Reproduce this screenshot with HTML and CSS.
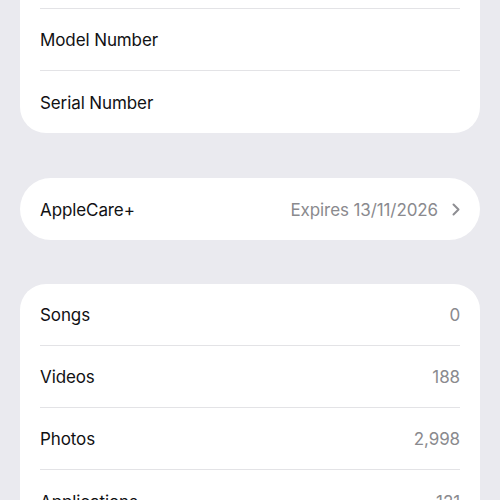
FILE: index.html
```html
<!DOCTYPE html>
<html>
<head>
<meta charset="utf-8">
<link rel="stylesheet" href="styles.css">
</head>
<body>
<div class="page">
  <div class="card card-first">
    <div class="row"></div>
    <div class="row"><span class="label">Model Number</span><span class="value"></span></div>
    <div class="row"><span class="label">Serial Number</span><span class="value"></span></div>
  </div>
  <div class="card card-pill">
    <div class="row"><span class="label">AppleCare+</span><span class="value">Expires 13/11/2026<svg class="chev" width="8" height="13" viewBox="0 0 8 13"><path d="M1.5 1.5 L6.5 6.5 L1.5 11.5" fill="none" stroke="#8e8e93" stroke-width="2" stroke-linecap="round" stroke-linejoin="round"/></svg></span></div>
  </div>
  <div class="card">
    <div class="row"><span class="label">Songs</span><span class="value">0</span></div>
    <div class="row"><span class="label">Videos</span><span class="value">188</span></div>
    <div class="row"><span class="label">Photos</span><span class="value">2,998</span></div>
    <div class="row"><span class="label">Applications</span><span class="value">121</span></div>
  </div>
</div>
</body>
</html>
```

FILE: styles.css
```css
html, body {
  margin: 0;
  padding: 0;
  background: #eaeaef;
  overflow: hidden;
}
.page {
  display: flex;
  flex-direction: column;
  gap: 45px;
  padding: 0 20px;
  font-family: "Inter", "Liberation Sans", sans-serif;
}
.card {
  background: #ffffff;
  border-radius: 26px;
  overflow: hidden;
}
.card-first {
  margin-top: -53px;
}
.card-pill {
  border-radius: 31px;
  margin-bottom: -1px;
}
.row {
  height: 62px;
  margin: 0 20px;
  display: flex;
  align-items: center;
  justify-content: space-between;
  box-sizing: border-box;
  border-bottom: 1px solid #e3e3e6;
  padding-top: 1px;
}
.row:last-child {
  border-bottom: none;
}
.label {
  font-size: 17px;
  color: #111113;
  letter-spacing: -0.1px;
}
.value {
  font-size: 17px;
  color: #8a8a8e;
  display: flex;
  align-items: center;
  gap: 14px;
  letter-spacing: -0.1px;
}
.chev {
  display: block;
}
```
